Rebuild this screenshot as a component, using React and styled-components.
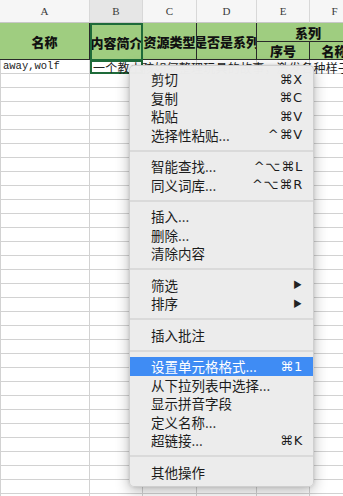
import React from "react";
import styled, { createGlobalStyle, css } from "styled-components";

const Global = createGlobalStyle`
  html, body { margin: 0; padding: 0; background: #fff; }
  body { width: 343px; height: 496px; overflow: hidden; }
`;

const COLS = "90px 53px 54px 60px 53px 50px";

const Sheet = styled.div`
  position: relative;
  width: 343px;
  height: 496px;
  overflow: hidden;
  background: #fff;
`;

const LetterRow = styled.div`
  display: grid;
  grid-template-columns: ${COLS};
  height: 23px;
  background: #f6f6f6;
`;

const Letter = styled.div`
  display: flex;
  align-items: center;
  justify-content: center;
  border-right: 1px solid #d8d8d8;
  border-bottom: 1px solid #c8c8c8;
  font-family: "Liberation Serif", "DejaVu Serif", serif;
  font-size: 11px;
  color: #3a3a3a;
  box-sizing: border-box;
  ${(p) => p.$active && css`background: #e6e6e6;`}
`;

const HeadBlock = styled.div`
  display: grid;
  grid-template-columns: ${COLS};
  grid-template-rows: 19px 18px;
  background: #9fcd80;
`;

const HeadCell = styled.div`
  display: flex;
  align-items: center;
  justify-content: center;
  box-sizing: border-box;
  border-right: 1px solid #2a2a2a;
  border-bottom: 1px solid #2a2a2a;
  font-family: "Noto Sans CJK SC", sans-serif;
  font-weight: 900;
  font-size: 13px;
  color: #111;
  white-space: nowrap;
  overflow: hidden;
  grid-column: ${(p) => p.$col};
  grid-row: ${(p) => p.$row};
  ${(p) => p.$selected && css`border: 2px solid #1e6b3a; border-bottom-width: 1px;`}
`;

const Row = styled.div`
  display: grid;
  grid-template-columns: ${COLS};
  height: 14px;
`;

const Cell = styled.div`
  position: relative;
  box-sizing: border-box;
  border-right: 1px solid #d2d2d2;
  border-bottom: 1px solid #d2d2d2;
  ${(p) => p.$first && css`border-left: 1px solid #d2d2d2;`}
  ${(p) => p.$selected && css`border: 2px solid #1e6b3a;`}
`;

const CellText = styled.span`
  position: absolute;
  left: ${(p) => (p.$cjk ? "1px" : "2px")};
  top: -1px;
  line-height: 14px;
  white-space: nowrap;
  color: #222;
  font-size: ${(p) => (p.$cjk ? "12px" : "10.5px")};
  letter-spacing: ${(p) => (p.$cjk ? "0.25px" : "0")};
  font-family: ${(p) =>
    p.$cjk
      ? `"Noto Sans CJK SC", sans-serif`
      : `"Liberation Mono", "DejaVu Sans Mono", monospace`};
  z-index: 1;
`;

const Menu = styled.div`
  position: absolute;
  left: 129px;
  top: 65px;
  width: 185px;
  box-sizing: border-box;
  padding: 4px 0 5px;
  background: rgba(236, 236, 236, 0.99);
  border: 1px solid rgba(0, 0, 0, 0.12);
  border-radius: 5px;
  box-shadow: 0 4px 14px rgba(0, 0, 0, 0.28), 0 0 3px rgba(0, 0, 0, 0.12);
  z-index: 5;
  font-family: "Noto Sans CJK SC", "DejaVu Sans", sans-serif;
`;

const Item = styled.div`
  display: flex;
  align-items: center;
  justify-content: space-between;
  height: 18.5px;
  padding: 0 10px 0 21px;
  font-size: 13.5px;
  color: #1c1c1c;
  white-space: nowrap;
  ${(p) => p.$hl && css`background: #3f8cf4; color: #fff;`}
`;

const Shortcut = styled.span`
  font-family: "DejaVu Sans", "Noto Sans CJK SC", sans-serif;
  font-size: 13px;
  letter-spacing: 0.8px;
`;

const Arrow = styled.span`
  font-size: 9px;
  color: #222;
  margin-right: 1px;
`;

const Separator = styled.div`
  height: 13px;
  display: flex;
  align-items: center;
  &::after {
    content: "";
    flex: 1;
    height: 2px;
    background: #dadada;
  }
`;

const groups = [
  [
    ["剪切", "⌘X"],
    ["复制", "⌘C"],
    ["粘贴", "⌘V"],
    ["选择性粘贴...", "^⌘V"],
  ],
  [
    ["智能查找...", "^⌥⌘L"],
    ["同义词库...", "^⌥⌘R"],
  ],
  [["插入..."], ["删除..."], ["清除内容"]],
  [
    ["筛选", null, true],
    ["排序", null, true],
  ],
  [["插入批注"]],
  [
    ["设置单元格格式...", "⌘1", false, true],
    ["从下拉列表中选择..."],
    ["显示拼音字段"],
    ["定义名称..."],
    ["超链接...", "⌘K"],
  ],
  [["其他操作"]],
];

export default function App() {
  const letters = ["A", "B", "C", "D", "E", "F"];
  const emptyRows = Array.from({ length: 31 });
  return (
    <>
      <Global />
      <Sheet>
        <LetterRow>
          {letters.map((l) => (
            <Letter key={l} $active={l === "B"}>
              {l}
            </Letter>
          ))}
        </LetterRow>
        <HeadBlock>
          <HeadCell $col="1" $row="1 / 3">名称</HeadCell>
          <HeadCell $col="2" $row="1 / 3" $selected>内容简介</HeadCell>
          <HeadCell $col="3" $row="1 / 3">资源类型</HeadCell>
          <HeadCell $col="4" $row="1 / 3">是否是系列</HeadCell>
          <HeadCell $col="5 / 7" $row="1">系列</HeadCell>
          <HeadCell $col="5" $row="2">序号</HeadCell>
          <HeadCell $col="6" $row="2">名称</HeadCell>
        </HeadBlock>
        <Row>
          <Cell $first>
            <CellText>away,wolf</CellText>
          </Cell>
          <Cell $selected>
            <CellText $cjk>一个教小孩如何整理玩具的故事，激发各种样子</CellText>
          </Cell>
          <Cell />
          <Cell />
          <Cell />
          <Cell />
        </Row>
        {emptyRows.map((_, i) => (
          <Row key={i}>
            <Cell $first />
            <Cell />
            <Cell />
            <Cell />
            <Cell />
            <Cell />
          </Row>
        ))}
        <Menu>
          {groups.map((g, gi) => (
            <React.Fragment key={gi}>
              {gi > 0 && <Separator />}
              {g.map(([label, sc, sub, hl]) => (
                <Item key={label} $hl={hl}>
                  <span>{label}</span>
                  {sc && <Shortcut>{sc}</Shortcut>}
                  {sub && <Arrow>▶</Arrow>}
                </Item>
              ))}
            </React.Fragment>
          ))}
        </Menu>
      </Sheet>
    </>
  );
}
